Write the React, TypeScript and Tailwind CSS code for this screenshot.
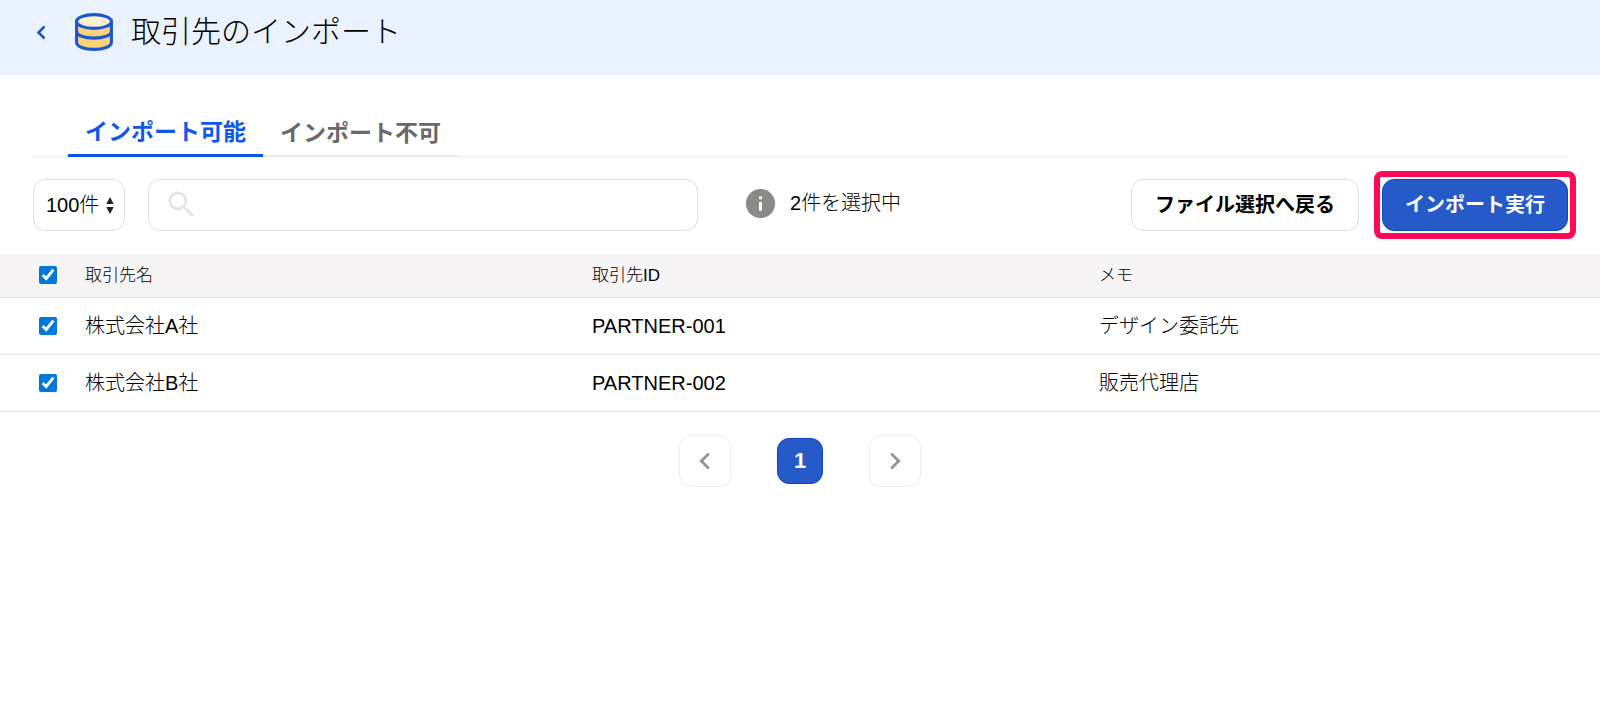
import { useState } from "react";

const partners = [
  { id: "PARTNER-001", name: "株式会社A社", memo: "デザイン委託先" },
  { id: "PARTNER-002", name: "株式会社B社", memo: "販売代理店" },
];

function DatabaseIcon() {
  return (
    <svg width="38" height="38" viewBox="0 0 38 38" fill="none" stroke="#1b57d0" strokeWidth="3.1" aria-hidden="true">
      <path d="M1.600 8v21.500c0 4 7.800 6.900 17.400 6.900s17.400-2.900 17.400-6.900V8z" fill="#ffd27b" />
      <ellipse cx="19" cy="8.500" rx="17.400" ry="6.900" fill="#fff0d0" />
      <path d="M1.600 18.500c0 4 7.800 6.600 17.400 6.600s17.400-2.600 17.400-6.600" />
    </svg>
  );
}

function Chevron({ left = false, size = 24 }: { left?: boolean; size?: number }) {
  return (
    <svg width={size} height={size} viewBox="0 0 24 24" fill="currentColor" aria-hidden="true">
      {left ? (
        <path d="M15.410 7.410 14 6l-6 6 6 6 1.410-1.410L10.830 12z" />
      ) : (
        <path d="M10 6 8.590 7.410 13.170 12l-4.580 4.590L10 18l6-6z" />
      )}
    </svg>
  );
}

function Header() {
  return (
    <header className="flex h-[75px] items-start bg-[#eaf2ff] pl-[29px] pt-[13px]">
      <a href="#back" aria-label="戻る" className="mt-1 flex h-8 w-[26px] items-center text-[#1b57d0]">
        <svg width="24" height="24" viewBox="0 0 24 24" fill="none" stroke="currentColor" strokeWidth="2.6" aria-hidden="true">
          <path d="M15.500 5.500 9.500 11.500l6 6" />
        </svg>
      </a>
      <div className="ml-5 flex items-center gap-[18px]">
        <DatabaseIcon />
        <h1 className="text-[30px] font-light leading-9">取引先のインポート</h1>
      </div>
    </header>
  );
}

function Tabs() {
  return (
    <div role="tablist" className="mx-8 mt-8 flex border-b border-[#ececec] pl-9 text-[23px] font-bold">
      <button role="tab" aria-selected="true" className="-mb-px h-[50px] border-b-[3px] border-[#0a55f0] px-[17px] pt-1 text-[#0f57ee]">
        インポート可能
      </button>
      <button role="tab" aria-selected="false" className="-mb-px h-[50px] border-b-2 border-[#e8e8e8] px-[17px] pt-1 text-[#6b6967]">
        インポート不可
      </button>
    </div>
  );
}

function Toolbar({ count }: { count: number }) {
  return (
    <div className="mt-[22px] flex items-center pl-[33px] pr-8 text-xl">
      <div className="relative">
        <select aria-label="表示件数" className="h-[52px] w-[92px] appearance-none rounded-xl border border-[#dedede] bg-white pl-3 font-light">
          <option>100件</option>
        </select>
        <svg className="pointer-events-none absolute right-[11px] top-[18px]" width="8" height="17" viewBox="0 0 8 17" fill="#222" aria-hidden="true">
          <path d="M4 0 7.700 7H.300zM4 17 .300 10h7.400z" />
        </svg>
      </div>
      <div className="relative ml-[23px] w-[550px]">
        <svg className="absolute left-4 top-2" width="35" height="35" viewBox="0 0 24 24" fill="#e4e4e4" aria-hidden="true">
          <path d="M15.500 14h-.790l-.280-.270A6.471 6.471 0 0 0 16 9.500 6.500 6.500 0 1 0 9.500 16c1.610 0 3.090-.590 4.230-1.570l.270.280v.790l5 4.990L20.490 19zm-6 0C7.010 14 5 11.990 5 9.500S7.010 5 9.500 5 14 7.010 14 9.500 11.990 14 9.500 14" />
        </svg>
        <input type="text" aria-label="検索" className="block h-[52px] w-full rounded-xl border border-[#dedede] pl-14 pr-3" />
      </div>
      <div className="ml-[45px] flex items-center gap-3 pb-1">
        <svg width="35" height="35" viewBox="0 0 24 24" fill="#8a8a88" aria-hidden="true">
          <path d="M12 2a10 10 0 1 0 0 20 10 10 0 0 0 0-20m1 15h-2v-6h2zm0-8h-2V7h2z" />
        </svg>
        <p className="font-light">{count}件を選択中</p>
      </div>
      <div className="ml-auto flex gap-[23px] font-bold">
        <button className="h-[52px] w-[228px] rounded-xl border border-[#dedede] bg-white">ファイル選択へ戻る</button>
        <div className="-m-2 rounded-lg border-[6px] border-[#ff0a57] p-[2px]">
          <button className="block h-[52px] w-[186px] rounded-xl border border-[#0d49c4] bg-[#265ac8] text-white">インポート実行</button>
        </div>
      </div>
    </div>
  );
}

export default function App() {
  const [selected, setSelected] = useState<string[]>(partners.map((p) => p.id));

  const toggle = (id: string) =>
    setSelected(selected.includes(id) ? selected.filter((s) => s !== id) : [...selected, id]);

  const toggleAll = () =>
    setSelected(selected.length === partners.length ? [] : partners.map((p) => p.id));

  return (
    <div className="min-h-screen bg-white font-['Liberation_Sans','Noto_Sans_CJK_JP',sans-serif] text-black">
      <Header />
      <main>
        <Tabs />
        <Toolbar count={selected.length} />

        <table className="mt-[23px] w-full table-fixed text-left">
          <thead className="bg-[#f6f4f5] text-[17px]">
            <tr className="h-[43px] border-b border-[#e2e0e1]">
              <th className="w-[79px] pl-[39px]">
                <input
                  type="checkbox"
                  aria-label="すべて選択"
                  className="block size-[18px] accent-[#0078d7]"
                  checked={selected.length === partners.length}
                  onChange={toggleAll}
                />
              </th>
              <th className="px-[6px] font-light">取引先名</th>
              <th className="px-[6px] font-light">取引先ID</th>
              <th className="px-[6px] font-light">メモ</th>
            </tr>
          </thead>
          <tbody className="text-xl font-light">
            {partners.map((p) => (
              <tr key={p.id} className="h-[57px] border-b border-[#e9e9e9]">
                <td className="pl-[39px]">
                  <input
                    type="checkbox"
                    aria-label={p.name}
                    className="block size-[18px] accent-[#0078d7]"
                    checked={selected.includes(p.id)}
                    onChange={() => toggle(p.id)}
                  />
                </td>
                <td className="px-[6px]">{p.name}</td>
                <td className="px-[6px]">{p.id}</td>
                <td className="px-[6px]">{p.memo}</td>
              </tr>
            ))}
          </tbody>
        </table>

        <nav aria-label="ページ" className="mt-[23px] flex items-center justify-center gap-[46px]">
          <button aria-label="前へ" className="flex h-[52px] w-[52px] items-center justify-center rounded-xl border border-[#ededed] text-[#969696]">
            <Chevron left size={34} />
          </button>
          <button aria-current="page" className="size-[46px] rounded-xl border border-[#0d49c4] bg-[#265ac8] text-[22px] font-bold text-white">
            1
          </button>
          <button aria-label="次へ" className="flex h-[52px] w-[52px] items-center justify-center rounded-xl border border-[#ededed] text-[#969696]">
            <Chevron size={34} />
          </button>
        </nav>
      </main>
    </div>
  );
}
